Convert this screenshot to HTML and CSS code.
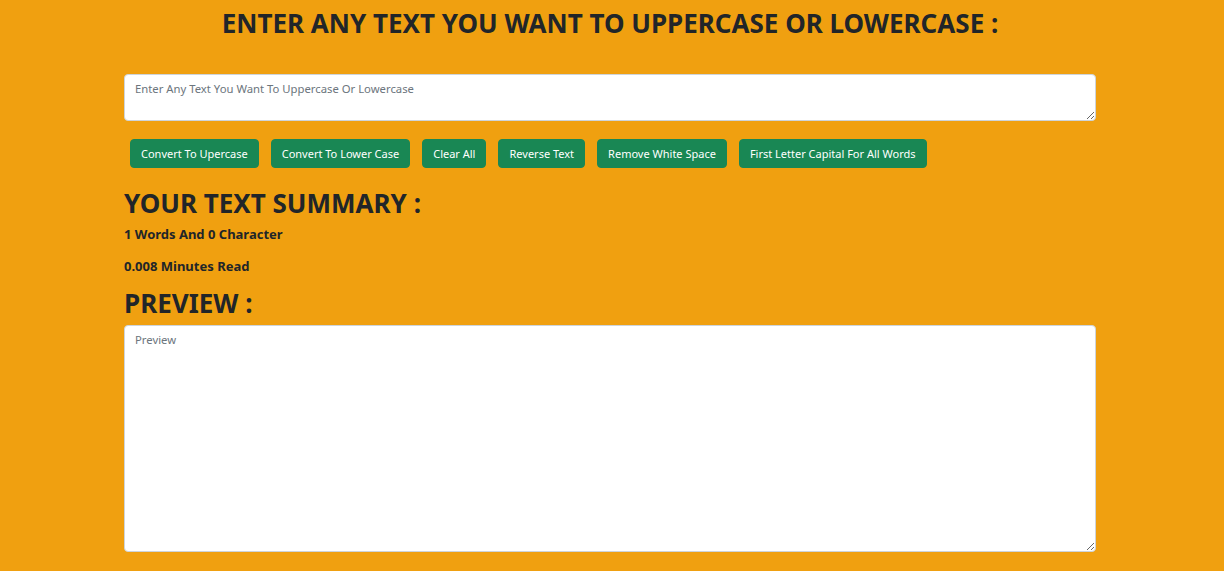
FILE: index.html
```html
<!DOCTYPE html>
<html lang="en">
<head>
<meta charset="utf-8">
<title>Text Utils</title>
<link rel="stylesheet" href="styles.css">
</head>
<body>
<main class="container">
  <h1 class="title">ENTER ANY TEXT YOU WANT TO UPPERCASE OR LOWERCASE :</h1>
  <textarea class="box box-input" placeholder="Enter Any Text You Want To Uppercase Or Lowercase"></textarea>
  <div class="actions">
    <button class="btn">Convert To Upercase</button>
    <button class="btn">Convert To Lower Case</button>
    <button class="btn">Clear All</button>
    <button class="btn">Reverse Text</button>
    <button class="btn">Remove White Space</button>
    <button class="btn">First Letter Capital For All Words</button>
  </div>
  <h2 class="section">YOUR TEXT SUMMARY :</h2>
  <p class="stat">1 Words And 0 Character</p>
  <p class="stat">0.008 Minutes Read</p>
  <h2 class="section section-preview">PREVIEW :</h2>
  <textarea class="box box-preview" placeholder="Preview"></textarea>
</main>
</body>
</html>
```
FILE: styles.css
```css
* { box-sizing: border-box; }
html, body { margin: 0; padding: 0; }
body {
  background: #f0a010;
  color: #212529;
  font-family: "Noto Sans", "Open Sans", sans-serif;
  height: 571px;
  overflow: hidden;
}
.container {
  width: 976px;
  padding-right: 4px;
  margin: 0 auto;
  display: flex;
  flex-direction: column;
}
.title {
  margin: 6px 0 0;
  font-size: 26px;
  line-height: 34px;
  font-weight: 700;
  text-align: center;
}
.box {
  display: block;
  width: 972px;
  border: 1px solid #ced4da;
  border-radius: 4px;
  background: #fff;
  padding: 5px 10px;
  font-family: inherit;
  font-size: 11.3px;
  line-height: 18px;
  color: #495057;
  resize: vertical;
}
.box::placeholder { color: #6c757d; }
.box-input { margin-top: 34px; height: 47px; }
.box-preview { margin-top: 5px; height: 227px; }
.actions {
  display: flex;
  gap: 12px;
  padding-left: 6px;
  margin-top: 18px;
}
.btn {
  height: 29px;
  padding: 0 10px;
  border: 1px solid #198754;
  border-radius: 4px;
  background: #198754;
  color: #fff;
  font-family: inherit;
  font-size: 11px;
  line-height: 1;
}
.section {
  margin: 18px 0 0;
  font-size: 26px;
  line-height: 34px;
  font-weight: 700;
}
.section-preview { margin-top: 10px; }
.stat {
  margin: 4px 0 0;
  font-size: 13px;
  line-height: 20px;
  font-weight: 700;
}
.stat + .stat { margin-top: 12px; }
```
